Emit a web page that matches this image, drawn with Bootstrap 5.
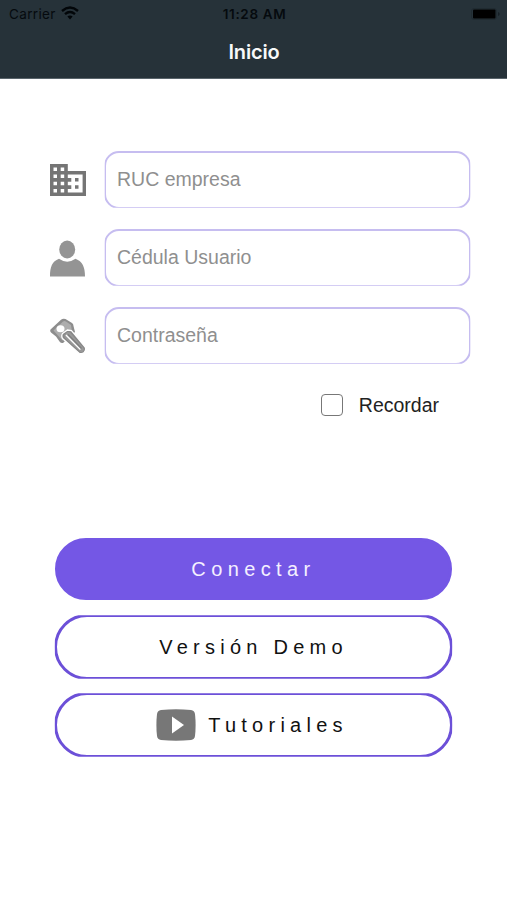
<!DOCTYPE html>
<html lang="es">
<head>
<meta charset="utf-8">
<meta name="viewport" content="width=device-width, initial-scale=1">
<title>Inicio</title>
<link href="https://cdn.jsdelivr.net/npm/bootstrap@5.3.0/dist/css/bootstrap.min.css" rel="stylesheet">
<style>
body{font-family:"Liberation Sans",Arial,sans-serif;background:#fff;min-height:900px;overflow:hidden}
.topbar{height:79px;background:#263239;border-bottom:1px solid #59646b;font-family:Inter,sans-serif}
.status{height:27px;color:#050a0e;font-size:13.5px;padding:1px 7px 0 9px}
.status .carrier{letter-spacing:.35px}
.status .clock{font-weight:600;letter-spacing:.65px}
.status .side{width:120px}
.status .wifi{margin:-2px 0 0 5px}
.status .battery{margin-top:-1px}
.page-title{height:50px;font-size:20px;font-weight:600;color:#f7f9fa;letter-spacing:-.15px;padding-left:1px}
.login{padding:71.500px 36px 0 49px}
.field{height:58px;margin-bottom:20px}
.field svg{width:37px;height:37px;flex:none;margin:1px 18px 0 0}
.field .form-control{height:58px;border:2px solid #c6bdf0;border-radius:15px;clip-path:inset(.5px .7px .7px);font-size:19.5px;padding:0 11px;color:#333}
.field .form-control::placeholder{color:#8f8f8f;opacity:1}
.remember{padding:10px 32px 0 0;font-size:19.5px;color:#222;height:30px}
.remember .form-check-input{width:22px;height:22px;border:1.5px solid #777;border-radius:4px;margin:0 15.500px 0 0}
.remember .form-check-label{padding-top:2px}
.actions{padding:121.500px 54px 0;gap:12px}
.actions .btn{height:66px;border-radius:33px;font-size:20px;letter-spacing:5.250px;padding:0;border:3px solid #6c50d8;clip-path:inset(1.2px .8px);color:#111}
.actions .btn-main{height:62px;margin:2px 1px;background:#7457e5;border-color:#7457e5;color:#f4f0ff;clip-path:none;letter-spacing:5.400px}
.actions .tutorials{padding-right:3px}
.tutorials svg{margin-right:12px}
</style>
</head>
<body>
<header class="topbar">
  <div class="status d-flex align-items-center justify-content-between">
    <div class="side d-flex align-items-center">
      <span class="carrier">Carrier</span>
      <svg class="wifi" width="18" height="14" viewBox="0 0 18 14" fill="none" stroke="#020609" stroke-width="2.4"><path d="M1 5Q9-1.8 17 5M4 8.2q5-4.2 10 0"/><path d="M6.4 10.6q2.6-2.1 5.2 0L9 13.4z" fill="#020609" stroke="none"/></svg>
    </div>
    <span class="clock">11:28 AM</span>
    <div class="side d-flex justify-content-end">
      <svg class="battery" width="29" height="12" viewBox="0 0 29 12"><rect x=".5" y=".5" width="25" height="11" rx="2.5" fill="none" stroke="#202b31"/><rect x="2" y="1.500" width="22.500" height="9" rx="1" fill="#000"/><path d="M27 4v4q1.700-.5 1.700-2T27 4z" fill="#172027"/></svg>
    </div>
  </div>
  <div class="page-title d-flex align-items-center justify-content-center">Inicio</div>
</header>
<main>
  <form>
    <div class="login">
      <div class="field d-flex align-items-center">
        <svg viewBox="0 0 37 37"><path fill="#757575" fill-rule="evenodd" d="M1 2h17.800v7H37v25H1zM4.500 5.500v3.500H8V5.500zm7.200 0v3.500h3.500V5.500zM4.500 12.500V16H8v-3.500zm7.200 0V16h3.500v-3.500zM4.500 19.700v3.500H8v-3.500zm7.200 0v3.500h3.500v-3.500zM4.500 27v3.500H8V27zm7.200 0v3.500h3.500V27zM18.800 12.500V16h3.500v3.700h-3.500v3.500h3.500V27h-3.500v3.500h14.800v-18zM26 16h3.500v3.500H26zm0 7.200h3.500v3.500H26z"/></svg>
        <input class="form-control" type="text" placeholder="RUC empresa">
      </div>
      <div class="field d-flex align-items-center">
        <svg viewBox="0 0 37 37" fill="#949494"><ellipse cx="18.200" cy="9.500" rx="8" ry="9"/><path d="M1 36.500C1 27 3 21.500 10 18.800q8.200 5.800 16.500 0C33.500 21.500 36 27 36 36.500z"/></svg>
        <input class="form-control" type="text" placeholder="Cédula Usuario">
      </div>
      <div class="field d-flex align-items-center">
        <svg viewBox="0 0 37 37"><path d="M1.500 11.500 12 1.800Q14 0 16.500 1l6.500 4q1.500 1 1.500 3l1.500 6-12 11q-2 .5-3.500-1.500L7 18.500l-5-4q-1.500-1.500-.5-3z" fill="#8d8d8d"/><path d="M4.500 12.500 14 3.500q1.500-1 3 0l5 3.500 1 6.500-9.500 9L8.500 17z" fill="#adadad"/><ellipse cx="11.500" cy="10.800" rx="4" ry="3.500" fill="#fff"/><path d="m13.500 15.500 5-3.500 4 .5 13.700 16.500q1.300 3-1 5.500-2.500 2-5.500.5L13.500 20.500q-1.500-2.500 0-5z" fill="#888" stroke="#fff" stroke-width="1.300"/><path d="m15.500 16.500 3-2.500 2.500.5L34.500 30q1 2-.7 3.500-1.500 1-3 0L15.500 19.500z" fill="#999"/><path d="m17 17 14.500 14.500" stroke="#fff" stroke-width="1.500"/><path d="m19 16.500 13.500 14" stroke="#7f7f7f" stroke-width="1.500"/></svg>
        <input class="form-control" type="password" placeholder="Contraseña">
      </div>
      <div class="remember form-check d-flex justify-content-end align-items-center m-0">
        <input class="form-check-input float-none" type="checkbox" id="recordar">
        <label class="form-check-label" for="recordar">Recordar</label>
      </div>
    </div>
    <div class="actions d-flex flex-column">
      <button type="button" class="btn btn-main">Conectar</button>
      <button type="button" class="btn">Versión Demo</button>
      <button type="button" class="btn tutorials d-flex align-items-center justify-content-center">
        <svg width="40" height="32" viewBox="0 0 40 32"><path d="M5 1Q20-.5 35 1q3.500.5 4 4 1.200 11 0 22-.5 3.500-4 4-15 1.300-30 0-3.500-.5-4-4Q-.2 16 1 5q.5-3.500 4-4z" fill="#777"/><path d="M16 7.500v17L28 16z" fill="#fff"/></svg>Tutoriales
      </button>
    </div>
  </form>
</main>
<script src="https://cdn.jsdelivr.net/npm/bootstrap@5.3.0/dist/js/bootstrap.bundle.min.js"></script>
</body>
</html>
